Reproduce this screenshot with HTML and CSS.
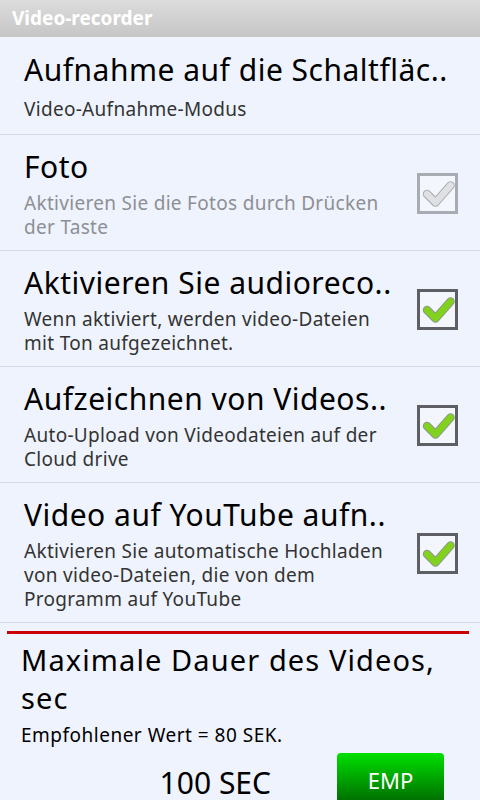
FILE: index.html
```html
<!DOCTYPE html>
<html lang="de">
<head>
  <meta charset="UTF-8">
  <meta name="viewport" content="width=device-width, initial-scale=1.0">
  <title>Video-recorder</title>
  <link rel="stylesheet" href="styles.css">
</head>
<body>

  <header class="topbar">Video-recorder</header>

  <div class="pref pref-short">
    <div class="pref-text">
      <div class="pref-title">Aufnahme auf die Schaltfläc..</div>
      <div class="pref-summary">Video-Aufnahme-Modus</div>
    </div>
  </div>

  <div class="pref disabled">
    <div class="pref-text">
      <div class="pref-title">Foto</div>
      <div class="pref-summary">Aktivieren Sie die Fotos durch Drücken der Taste</div>
    </div>
    <span class="checkbox">
      <svg viewBox="0 0 41 41" width="41" height="41">
        <polyline class="check-edge" points="10,21 18.5,29.5 33.5,12.5"/>
        <polyline class="check-fill" points="10,21 18.5,29.5 33.5,12.5"/>
      </svg>
    </span>
  </div>

  <div class="pref">
    <div class="pref-text">
      <div class="pref-title">Aktivieren Sie audioreco..</div>
      <div class="pref-summary">Wenn aktiviert, werden video-Dateien mit Ton aufgezeichnet.</div>
    </div>
    <span class="checkbox">
      <svg viewBox="0 0 41 41" width="41" height="41">
        <polyline class="check-edge" points="10,21 18.5,29.5 33.5,12.5"/>
        <polyline class="check-fill" points="10,21 18.5,29.5 33.5,12.5"/>
      </svg>
    </span>
  </div>

  <div class="pref">
    <div class="pref-text">
      <div class="pref-title">Aufzeichnen von Videos..</div>
      <div class="pref-summary">Auto-Upload von Videodateien auf der Cloud drive</div>
    </div>
    <span class="checkbox">
      <svg viewBox="0 0 41 41" width="41" height="41">
        <polyline class="check-edge" points="10,21 18.5,29.5 33.5,12.5"/>
        <polyline class="check-fill" points="10,21 18.5,29.5 33.5,12.5"/>
      </svg>
    </span>
  </div>

  <div class="pref">
    <div class="pref-text">
      <div class="pref-title">Video auf YouTube aufn..</div>
      <div class="pref-summary">Aktivieren Sie automatische Hochladen von video-Dateien, die von dem Programm auf YouTube</div>
    </div>
    <span class="checkbox">
      <svg viewBox="0 0 41 41" width="41" height="41">
        <polyline class="check-edge" points="10,21 18.5,29.5 33.5,12.5"/>
        <polyline class="check-fill" points="10,21 18.5,29.5 33.5,12.5"/>
      </svg>
    </span>
  </div>

  <div class="duration">
    <div class="red-line"></div>
    <h2 class="duration-title">Maximale Dauer des Videos, sec</h2>
    <p class="duration-hint">Empfohlener Wert = 80 SEK.</p>
    <div class="duration-row">
      <span class="duration-value">100 SEC</span>
      <button class="emp-btn">EMP</button>
    </div>
  </div>

</body>
</html>
```

FILE: styles.css
```css
body {
  font-family: "Noto Sans", "Open Sans", sans-serif;
  background-color: #eff3fd;
  margin: 0;
  padding: 0;
  overflow: hidden;
}

.topbar {
  height: 37px;
  line-height: 37px;
  padding-left: 12px;
  background: linear-gradient(#dcdcdc, #c6c6c6);
  color: white;
  font-size: 19px;
  font-weight: bold;
}

.pref {
  display: flex;
  align-items: center;
  padding: 12px 22px 11px 24px;
  border-bottom: 1px solid #d9dbe1;
}

.pref-short {
  padding-top: 13px;
  padding-bottom: 13px;
}

.pref-short .pref-summary {
  margin-top: 7px;
}

.pref-text {
  flex: 1;
  min-width: 0;
  padding-right: 25px;
}

.pref-title {
  font-size: 30px;
  line-height: 40px;
  letter-spacing: 0.5px;
  color: #000;
  white-space: nowrap;
}

.pref-summary {
  margin-top: 4px;
  font-size: 19px;
  line-height: 24px;
  letter-spacing: 0.3px;
  color: #333;
}

.disabled .pref-summary {
  color: #8d8f94;
}

.checkbox {
  width: 41px;
  height: 41px;
  flex-shrink: 0;
  box-sizing: border-box;
  border: 3px solid #5d5f64;
  background-color: #f4f6fd;
  position: relative;
}

.checkbox svg {
  position: absolute;
  left: -3px;
  top: -3px;
}

.check-edge {
  fill: none;
  stroke: #8f9296;
  stroke-width: 8.5;
  stroke-linecap: round;
  stroke-linejoin: round;
}

.check-fill {
  fill: none;
  stroke: #80d21c;
  stroke-width: 6.5;
  stroke-linecap: round;
  stroke-linejoin: round;
}

.disabled .checkbox {
  border-color: #a9abb3;
}

.disabled .check-edge {
  stroke: #a8a9ad;
}

.disabled .check-fill {
  stroke: #dfe0e3;
}

.duration {
  padding: 8px 11px 0 7px;
}

.red-line {
  height: 3px;
  background-color: #cc0000;
}

.duration-title {
  margin: 7px 0 0 14px;
  font-size: 29px;
  line-height: 38px;
  letter-spacing: 1.1px;
  font-weight: normal;
  color: #000;
}

.duration-hint {
  margin: 6px 0 0 14px;
  font-size: 19px;
  line-height: 24px;
  letter-spacing: 0.5px;
  color: #000;
}

.duration-row {
  display: flex;
  align-items: flex-start;
  margin-top: 6px;
}

.duration-value {
  flex: 1;
  text-align: right;
  padding-right: 66px;
  padding-top: 10px;
  font-size: 30px;
  line-height: 40px;
  color: #000;
}

.emp-btn {
  width: 107px;
  height: 56px;
  margin-right: 25px;
  border: none;
  border-radius: 4px;
  background: linear-gradient(#00e000, #005c00);
  color: white;
  font-family: "Noto Sans", sans-serif;
  font-size: 22px;
  padding: 0 0 2px;
}
```
